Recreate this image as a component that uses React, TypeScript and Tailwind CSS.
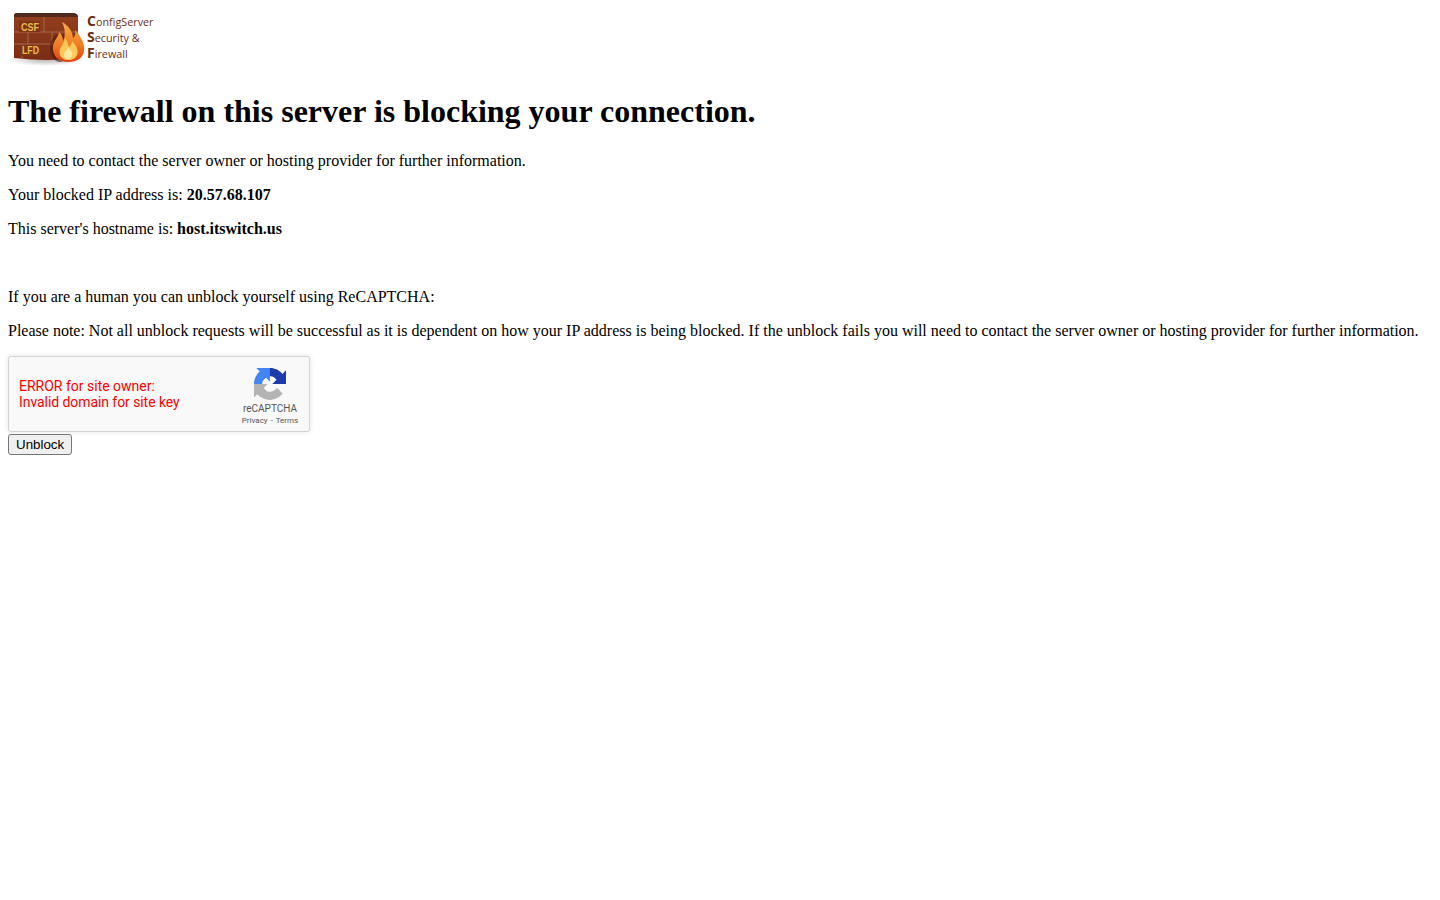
function Logo() {
    return (
        <svg width="150" height="63" viewBox="0 0 150 63" className="block">
            <defs>
                <linearGradient id="wall" x1="0" y1="0" x2="0" y2="1">
                    <stop offset="0" stopColor="#93401f" />
                    <stop offset="1" stopColor="#7a2c14" />
                </linearGradient>
                <linearGradient id="flame" x1="0" y1="0" x2="0" y2="1">
                    <stop offset="0" stopColor="#f6b04a" />
                    <stop offset="0.6" stopColor="#f07820" />
                    <stop offset="1" stopColor="#dc3f16" />
                </linearGradient>
                <radialGradient id="shadow">
                    <stop offset="0" stopColor="#888" stopOpacity="0.6" />
                    <stop offset="1" stopColor="#888" stopOpacity="0" />
                </radialGradient>
            </defs>
            <ellipse cx="38" cy="52" rx="38" ry="6" fill="url(#shadow)" />
            <path d="M6 8 Q6 5 9 5 H66 Q70 6 70 10 V50 Q40 54 6 50 Z" fill="url(#wall)" />
            <path d="M6 8 Q6 5 9 5 H66 Q70 6 70 9 L6 9 Z" fill="#4d2c1e" />
            <g stroke="#b0745a" strokeWidth="0.8" fill="none">
                <path d="M6 24 H70 M6 36 H70" />
                <path d="M20 24 V36 M36 9 V24 M44 24 V36" />
                <path d="M14 36 V50" />
            </g>
            <rect x="11" y="13" width="21" height="11" fill="#7f3418" />
            <rect x="11" y="37" width="21" height="11" fill="#7f3418" />
            <text x="13" y="23" textLength="18" lengthAdjust="spacingAndGlyphs" fontFamily="Liberation Sans, sans-serif" fontWeight="700" fontSize="11" fill="#e8bd4c">CSF</text>
            <text x="14" y="46" textLength="17" lengthAdjust="spacingAndGlyphs" fontFamily="Liberation Sans, sans-serif" fontWeight="700" fontSize="11" fill="#e8bd4c">LFD</text>
            <ellipse cx="52" cy="40" rx="10" ry="14" fill="#4d1c0c" opacity="0.6" />
            <path d="M60 54 C50 54 44 47 45 38 C46 32 50 30 51 24 C54 26 55 30 55 33 C58 28 57 20 54 14 C60 17 65 24 65 30 C67 28 68 26 67 22 C73 28 77 36 76 43 C75 50 69 54 60 54 Z" fill="url(#flame)" />
            <path d="M60 52 C54 52 50 47 52 41 C54 37 56 35 57 30 C60 34 60 37 61 39 C63 37 64 35 64 33 C68 37 71 42 69 47 C68 50 65 52 60 52 Z" fill="#f9c75a" />
            <path d="M60 51 C56 51 55 47 57 44 C59 42 60 40 60 39 C63 42 65 45 64 48 C63 50 62 51 60 51 Z" fill="#fdeaa0" />
            <g fontFamily="Open Sans, sans-serif" fill="#6d2c14" fontSize="10.8">
                <text x="79" y="17.5"><tspan fontWeight="700" fontSize="14">C</tspan>onfigServer</text>
                <text x="79" y="33.5"><tspan fontWeight="700" fontSize="14">S</tspan>ecurity &amp;</text>
                <text x="79" y="49.5"><tspan fontWeight="700" fontSize="14">F</tspan>irewall</text>
            </g>
        </svg>
    );
}

function RecaptchaIcon() {
    return (
        <svg width="32" height="32" viewBox="0 0 64 64" className="block">
            <path d="M64 31.955l-.033-1.37V4.687l-7.16 7.16C50.948 4.674 42.033.093 32.05.093c-10.4 0-19.622 4.96-25.458 12.64l11.736 11.86a15.55 15.55 0 0 1 4.754-5.334c2.05-1.6 4.952-2.906 8.968-2.906.485 0 .86.057 1.135.163 4.976.393 9.288 3.14 11.828 7.124l-8.307 8.307c10.522-.04 22.4-.066 27.295.001" fill="#1c3aa9" />
            <path d="M31.862.001l-1.37.033H4.594l7.16 7.16C4.58 13.053 0 21.968 0 31.95c0 10.4 4.96 19.622 12.64 25.458L24.5 45.672a15.55 15.55 0 0 1-5.334-4.754c-1.6-2.05-2.906-4.952-2.906-8.968 0-.485.057-.86.163-1.135.393-4.976 3.14-9.288 7.124-11.828l8.307 8.307c-.04-10.522-.066-22.4.001-27.295" fill="#4285f4" />
            <path d="M.001 31.953l.033 1.37v25.898l7.16-7.16c5.86 7.173 14.775 11.754 24.757 11.754 10.4 0 19.622-4.96 25.458-12.64l-11.736-11.86a15.55 15.55 0 0 1-4.754 5.334c-2.05 1.6-4.952 2.906-8.968 2.906-.485 0-.86-.057-1.135-.163-4.976-.393-9.288-3.14-11.828-7.124l8.307-8.307c-10.522.04-22.4.066-27.295-.001" fill="#b4b4b4" />
        </svg>
    );
}

function RecaptchaBox() {
    return (
        <div className="w-[302px] h-[76px] bg-[#f9f9f9] border border-[#d3d3d3] rounded-[3px] shadow-[0_0_4px_1px_rgba(0,0,0,0.08)] flex items-stretch justify-between font-['Roboto',sans-serif]">
            <div className="pl-[10px] pt-[21px] text-[14px] leading-[16px] text-[#ff0000]">
                <div>ERROR for site owner:</div>
                <div className="tracking-[-0.07px]">Invalid domain for site key</div>
            </div>
            <div className="w-[70px] mr-[4px] pt-[11px] flex flex-col items-center text-[#555]">
                <RecaptchaIcon />
                <div className="text-[10px] leading-[12px] mt-[3px]">reCAPTCHA</div>
                <div className="text-[8px] leading-[10px] mt-[1px] whitespace-nowrap [word-spacing:1px]">Privacy - Terms</div>
            </div>
        </div>
    );
}

export default function App() {
    return (
        <div className="m-2 font-['Liberation_Serif',serif] text-[16px] leading-[18px] text-black">
            <div className="pb-[1px]">
                <Logo />
            </div>
            <h1 className="text-[32px] leading-[37px] font-bold mt-[21px] mb-[22px]">
                The firewall on this server is blocking your connection.
            </h1>
            <p className="mb-4">You need to contact the server owner or hosting provider for further information.</p>
            <p className="mb-4">
                Your blocked IP address is: <b className="font-bold">20.57.68.107</b>
            </p>
            <p className="mb-4">
                This server's hostname is: <b className="font-bold">host.itswitch.us</b>
            </p>
            <p className="mb-4">&nbsp;</p>
            <p className="mb-4">If you are a human you can unblock yourself using ReCAPTCHA:</p>
            <p className="mb-4">
                Please note: Not all unblock requests will be successful as it is dependent on how your IP address is being blocked. If the unblock fails you will need to contact the server owner or hosting provider for further information.
            </p>
            <RecaptchaBox />
            <button className="block mt-[2px] h-[21px] px-[7px] bg-[#efefef] border border-[#767676] rounded-[3px] font-['Liberation_Sans',sans-serif] text-[13.33px] leading-[15px] text-black">
                Unblock
            </button>
        </div>
    );
}
